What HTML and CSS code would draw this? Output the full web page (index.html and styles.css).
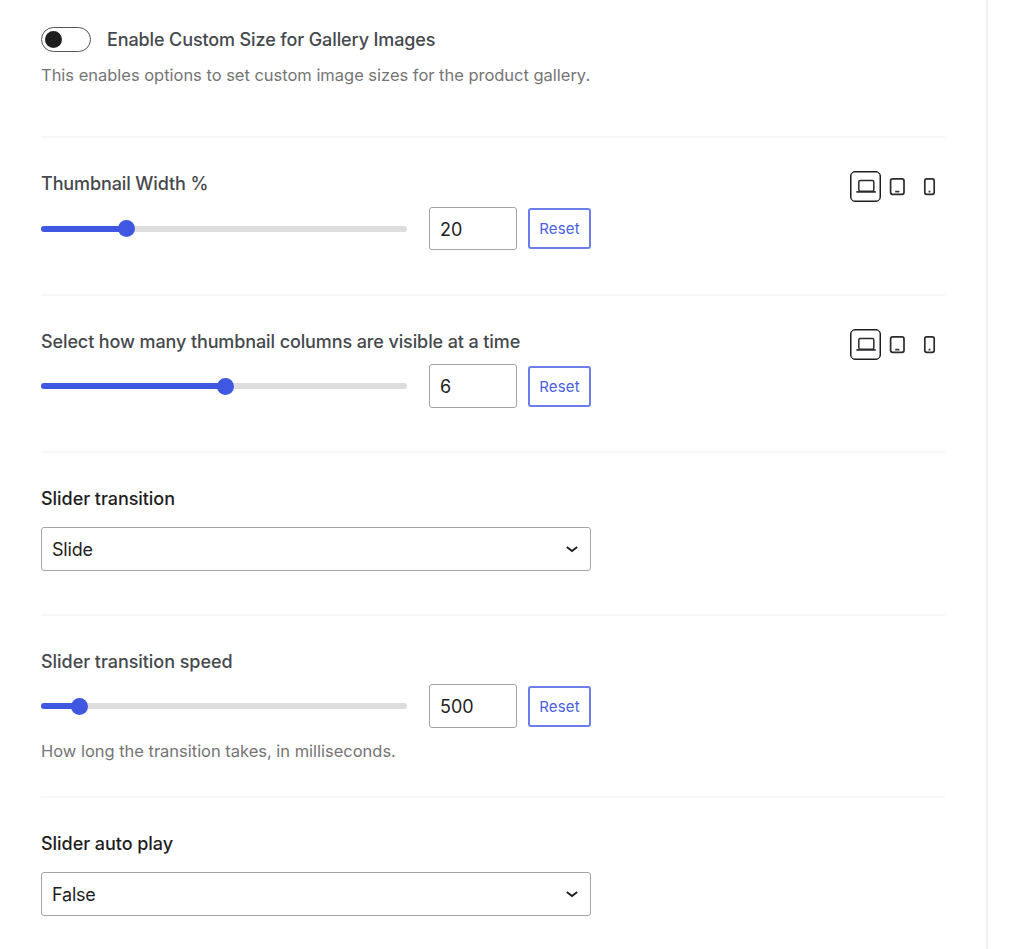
FILE: index.html
```html
<!DOCTYPE html>
<html lang="en">
<head>
<meta charset="utf-8">
<title>Gallery settings</title>
<link rel="stylesheet" href="styles.css">
</head>
<body>
<svg width="0" height="0" class="defs" aria-hidden="true">
  <symbol id="laptop" viewBox="0 0 24 24"><rect x="4.8" y="5.6" width="15" height="10.6" rx="1.4" fill="none" stroke="#2a2b2f" stroke-width="1.5"/><path d="M2.4 16.9H21.8" stroke="#2a2b2f" stroke-width="1.7"/></symbol>
  <symbol id="tablet" viewBox="0 0 24 24"><rect x="5.6" y="3.9" width="13.4" height="15.4" rx="2" fill="none" stroke="#2a2b2f" stroke-width="1.7"/><path d="M10.2 16.6H14.4" stroke="#2a2b2f" stroke-width="1.6"/></symbol>
  <symbol id="phone" viewBox="0 0 24 24"><rect x="7.8" y="3.9" width="9.4" height="15.4" rx="2" fill="none" stroke="#2a2b2f" stroke-width="1.7"/><path d="M11.6 16.6H13.4" stroke="#2a2b2f" stroke-width="1.7"/></symbol>
  <symbol id="chevron" viewBox="0 0 14 8"><path d="M1.8 2.1L7 6L12.2 2.1" fill="none" stroke="#1e1e1e" stroke-width="1.9"/></symbol>
</svg>
<main class="panel">
  <section class="setting intro">
    <div class="toggle-row">
      <span class="toggle"><span class="knob"></span></span>
      <span class="label t-enable">Enable Custom Size for Gallery Images</span>
    </div>
    <p class="help">This enables options to set custom image sizes for the product gallery.</p>
  </section>

  <section class="setting width">
    <div class="head">
      <span class="label">Thumbnail Width %</span>
      <div class="devices">
        <span class="device active"><svg><use href="#laptop"/></svg></span>
        <span class="device tab"><svg><use href="#tablet"/></svg></span>
        <span class="device"><svg><use href="#phone"/></svg></span>
      </div>
    </div>
    <div class="controls">
      <div class="track"><span class="fill" style="width:85px"></span><span class="thumb"></span></div>
      <span class="number">20</span>
      <span class="reset">Reset</span>
    </div>
  </section>

  <section class="setting columns">
    <div class="head">
      <span class="label">Select how many thumbnail columns are visible at a time</span>
      <div class="devices">
        <span class="device active"><svg><use href="#laptop"/></svg></span>
        <span class="device tab"><svg><use href="#tablet"/></svg></span>
        <span class="device"><svg><use href="#phone"/></svg></span>
      </div>
    </div>
    <div class="controls">
      <div class="track"><span class="fill" style="width:183.5px"></span><span class="thumb"></span></div>
      <span class="number">6</span>
      <span class="reset">Reset</span>
    </div>
  </section>

  <section class="setting transition">
    <div class="head"><span class="label dark">Slider transition</span></div>
    <div class="select"><span>Slide</span><svg class="chevron"><use href="#chevron"/></svg></div>
  </section>

  <section class="setting speed">
    <div class="head"><span class="label t-speed">Slider transition speed</span></div>
    <div class="controls">
      <div class="track"><span class="fill" style="width:38px"></span><span class="thumb"></span></div>
      <span class="number">500</span>
      <span class="reset">Reset</span>
    </div>
    <p class="help">How long the transition takes, in milliseconds.</p>
  </section>

  <section class="setting autoplay">
    <div class="head"><span class="label dark">Slider auto play</span></div>
    <div class="select"><span>False</span><svg class="chevron"><use href="#chevron"/></svg></div>
  </section>
</main>
</body>
</html>
```
FILE: styles.css
```css
* { box-sizing: border-box; }
body { margin: 0; background: #fff; font-family: Inter, "Liberation Sans", sans-serif; color: #1e1e1e; overflow: hidden; }
.defs { position: absolute; }
.panel { width: 988px; height: 949px; padding: 0 43px 0 41px; border-right: 2px solid #f1f1f1; }
.setting { width: 904px; padding-top: 33px; border-bottom: 2px solid #f7f7f7; }
.intro { height: 138px; padding-top: 26px; }
.width { height: 158px; }
.columns { height: 157px; }
.transition { height: 163px; }
.speed { height: 182px; }
.autoplay { height: 151px; border-bottom: 0; }
.toggle-row { display: flex; align-items: center; gap: 16px; height: 26px; }
.toggle { width: 50px; height: 25px; border: 1px solid #555; border-radius: 13px; padding: 3px; }
.knob { display: block; width: 17px; height: 17px; border-radius: 50%; background: #1e1e1e; }
.label { padding-top: 1px; font-size: 18px; line-height: 24px; font-weight: 500; letter-spacing: -.11px; color: #45484d; white-space: nowrap; }
.label.t-enable { padding-top: 2px; letter-spacing: -.12px; }
.label.dark, .label.t-speed { letter-spacing: -.05px; }
.label.dark { color: #1e1e1e; }
.help { margin: 11px 0 0; font-size: 16.5px; line-height: 24px; letter-spacing: -.02px; color: #757575; white-space: nowrap; }
.head { display: flex; justify-content: space-between; height: 24px; }
.devices { display: flex; align-items: center; height: 31px; padding-right: 1px; }
.device { display: flex; align-items: center; justify-content: center; width: 31px; height: 31px; }
.device.tab { margin-right: 1px; }
.device svg { flex: none; width: 24px; height: 24px; }
.active { border: 1.5px solid #1e1e1e; border-radius: 5px; box-shadow: inset 0 0 0 .5px #1e1e1e; }
.controls { display: flex; align-items: center; height: 44px; margin-top: 11px; }
.width .controls { height: 43px; margin-top: 12px; }
.track { display: flex; align-items: center; width: 366px; height: 6px; margin-right: 22px; border-radius: 3px; background: #ddd; }
.fill { height: 6px; border-radius: 3px; background: #3f57e1; }
.thumb { width: 17px; height: 17px; margin-left: -8px; border-radius: 50%; background: #3f57e1; }
.number { width: 88px; height: 44px; margin-right: 11px; padding-left: 10px; border: 1px solid #a4a4a4; border-radius: 3px; font-size: 18px; line-height: 43px; }
.width .number { height: 43px; }
.reset { width: 63px; height: 41px; border: 2px solid #6b7ee9; border-radius: 3px; color: #4a60e3; font-size: 15px; line-height: 37px; text-align: center; letter-spacing: .2px; }
.select { display: flex; align-items: center; justify-content: space-between; width: 550px; height: 44px; margin-top: 17px; padding: 0 11px 0 10px; border: 1px solid #a4a4a4; border-radius: 3px; font-size: 18px; letter-spacing: -.2px; }
.chevron { width: 14px; height: 8px; }
```
